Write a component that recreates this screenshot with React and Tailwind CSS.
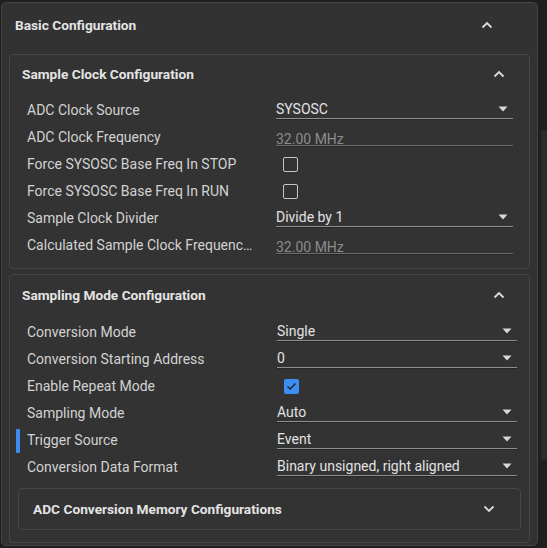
import React from 'react';

const font = { fontFamily: 'Roboto, "Liberation Sans", sans-serif' };

function Chevron({ up = true }) {
    return (
        <svg width="12" height="8" viewBox="0 0 12 8" aria-hidden>
            <polyline
                points={up ? '1.5,6.5 6,2 10.5,6.5' : '1.5,1.5 6,6 10.5,1.5'}
                fill="none"
                stroke="#dcdcdc"
                strokeWidth="1.8"
            />
        </svg>
    );
}

function Caret() {
    return (
        <svg width="10" height="6" viewBox="0 0 10 6" aria-hidden>
            <polygon points="0.5,0.5 9.5,0.5 5,5.5" fill="#d8d8d8" />
        </svg>
    );
}

function Select({ value }) {
    return (
        <div className="h-[22px] w-full pt-[3px] flex items-start justify-between border-b border-[#8e8e8e] shadow-[0_1px_0_#262626]">
            <span className="text-[14px] leading-[18px] text-[#e2e2e2]">{value}</span>
            <span className="mr-[5px] mt-[6px] flex">
                <Caret />
            </span>
        </div>
    );
}

function ReadOnly({ value }) {
    return (
        <div className="h-[22px] w-full pt-[3px] border-b border-[#6c6c6c] shadow-[0_1px_0_#262626]">
            <span className="text-[14px] leading-[18px] text-[#8c8c8c]">{value}</span>
        </div>
    );
}

function Checkbox({ checked }) {
    if (checked) {
        return (
            <div className="ml-[7px] mt-[6px] h-[15px] w-[15px] rounded-[2px] bg-[#3d8ef2] flex items-center justify-center">
                <svg width="11" height="9" viewBox="0 0 11 9" aria-hidden>
                    <polyline points="1.5,4.5 4.2,7 9.5,1.5" fill="none" stroke="#1d2a3a" strokeWidth="1.6" />
                </svg>
            </div>
        );
    }
    return <div className="ml-[7px] mt-[6px] h-[15px] w-[15px] rounded-[2px] border-[1.5px] border-[#c6c6c6]" />;
}

function Row({ label, marked, children, valueClass }) {
    return (
        <div className="relative flex h-[27px]">
            {marked ? <div className="absolute left-[6px] top-[2px] h-[24px] w-[4px] rounded-[1px] bg-[#3f8cf0]" /> : null}
            <div className="w-[266px] shrink-0 pl-[17px] pr-[19px] pt-[4px] text-[14px] leading-[18px] text-[#d2d2d2] truncate">{label}</div>
            <div className={valueClass}>{children}</div>
        </div>
    );
}

function CardHeader({ title, className }) {
    return (
        <div className={`flex items-center justify-between pl-[12px] pr-[24px] ${className}`}>
            <h2 className="text-[13.7px] font-bold text-[#e4e4e4]">{title}</h2>
            <Chevron />
        </div>
    );
}

export default function App() {
    const v1 = 'w-[237px] shrink-0';
    const v2 = 'w-[240px] shrink-0 ml-[1px]';
    return (
        <div className="flex h-[548px] w-[547px] overflow-hidden bg-[#1f1f1f]" style={font}>
            <div className="ml-[1px] mt-[2px] h-[544px] w-[537px] shrink-0 rounded-[5px] border border-[#444444] bg-[#323232] px-[7px]">
                <div className="flex h-[44px] items-center justify-between pl-[6px] pr-[37px]">
                    <h1 className="text-[13.7px] font-bold text-[#e4e4e4]">Basic Configuration</h1>
                    <Chevron />
                </div>

                <section className="mt-[7px] rounded-[4px] border border-[#474747] bg-[#333333] pb-[9px]">
                    <CardHeader title="Sample Clock Configuration" className="h-[38px]" />
                    <div className="pt-[4px]">
                        <Row label="ADC Clock Source" valueClass={v1}><Select value="SYSOSC" /></Row>
                        <Row label="ADC Clock Frequency" valueClass={v1}><ReadOnly value="32.00 MHz" /></Row>
                        <Row label="Force SYSOSC Base Freq In STOP" valueClass={v1}><Checkbox /></Row>
                        <Row label="Force SYSOSC Base Freq In RUN" valueClass={v1}><Checkbox /></Row>
                        <Row label="Sample Clock Divider" valueClass={v1}><Select value="Divide by 1" /></Row>
                        <Row label="Calculated Sample Clock Frequency (MHz)" valueClass={v1}><ReadOnly value="32.00 MHz" /></Row>
                    </div>
                </section>

                <section className="mt-[5px] rounded-[4px] border border-[#474747] bg-[#333333] pb-[12px]">
                    <CardHeader title="Sampling Mode Configuration" className="h-[40px]" />
                    <div className="pt-[4px]">
                        <Row label="Conversion Mode" valueClass={v2}><Select value="Single" /></Row>
                        <Row label="Conversion Starting Address" valueClass={v2}><Select value="0" /></Row>
                        <Row label="Enable Repeat Mode" valueClass={v2}><Checkbox checked /></Row>
                        <Row label="Sampling Mode" valueClass={v2}><Select value="Auto" /></Row>
                        <Row label="Trigger Source" marked valueClass={v2}><Select value="Event" /></Row>
                        <Row label="Conversion Data Format" valueClass={v2}><Select value="Binary unsigned, right aligned" /></Row>
                    </div>
                    <div className="mx-[8px] mt-[7px] flex h-[42px] items-center justify-between rounded-[4px] border border-[#474747] bg-[#333333] pl-[14px] pr-[25px]">
                        <h3 className="text-[13.7px] font-bold text-[#e4e4e4]">ADC Conversion Memory Configurations</h3>
                        <Chevron up={false} />
                    </div>
                </section>
            </div>
            <div className="ml-[3px] mt-[130px] h-[330px] w-[6px] rounded-[3px] bg-[#2c2c2c]" />
        </div>
    );
}
